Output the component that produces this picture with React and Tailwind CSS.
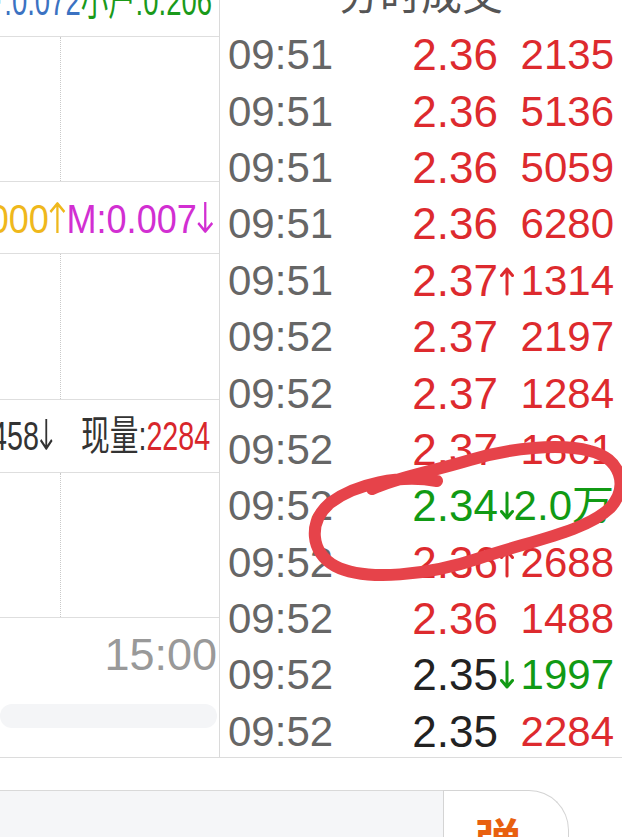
import React from 'react';

const RED = 'text-[#dd2a2e]';
const GREEN = 'text-[#119a14]';
const BLACK = 'text-[#222222]';

const ticks = [
  { time: '09:51', price: '2.36', vol: '2135', pc: RED, vc: RED },
  { time: '09:51', price: '2.36', vol: '5136', pc: RED, vc: RED },
  { time: '09:51', price: '2.36', vol: '5059', pc: RED, vc: RED },
  { time: '09:51', price: '2.36', vol: '6280', pc: RED, vc: RED },
  { time: '09:51', price: '2.37', arrow: 'up', vol: '1314', pc: RED, vc: RED },
  { time: '09:52', price: '2.37', vol: '2197', pc: RED, vc: RED },
  { time: '09:52', price: '2.37', vol: '1284', pc: RED, vc: RED },
  { time: '09:52', price: '2.37', vol: '1861', pc: RED, vc: RED },
  { time: '09:52', price: '2.34', arrow: 'down', vol: '2.0万', pc: GREEN, vc: GREEN },
  { time: '09:52', price: '2.36', arrow: 'up', vol: '2688', pc: RED, vc: RED },
  { time: '09:52', price: '2.36', vol: '1488', pc: RED, vc: RED },
  { time: '09:52', price: '2.35', arrow: 'down', vol: '1997', pc: BLACK, vc: GREEN },
  { time: '09:52', price: '2.35', vol: '2284', pc: BLACK, vc: RED },
];

// small trend arrow between price and volume
const Arrow = ({ dir }) => (
  <svg width="14" height="30" viewBox="0 0 14 30" className="block">
    {dir === 'up' ? (
      <path d="M7 28 V3 M1.5 9.5 L7 3 L12.5 9.5" fill="none" stroke="currentColor" strokeWidth="3" strokeLinecap="round" strokeLinejoin="round" />
    ) : (
      <path d="M7 2 V27 M1.5 20.5 L7 27 L12.5 20.5" fill="none" stroke="currentColor" strokeWidth="3" strokeLinecap="round" strokeLinejoin="round" />
    )}
  </svg>
);

// thin arrow used in the indicator labels
const LabelArrow = ({ dir }) => (
  <svg width="20" height="31" viewBox="0 0 20 31" className="inline-block align-baseline">
    {dir === 'up' ? (
      <path d="M10 31 V1.5 M2 10 L10 1.5 L18 10" fill="none" stroke="currentColor" strokeWidth="2.6" strokeLinejoin="round" />
    ) : (
      <path d="M10 0 V29.5 M2 21 L10 29.5 L18 21" fill="none" stroke="currentColor" strokeWidth="2.6" strokeLinejoin="round" />
    )}
  </svg>
);

const TickRow = ({ t }) => (
  <div className="flex h-[56.4px] shrink-0 items-center pl-[8px] pr-[8px] text-[42px] leading-none">
    <span className="text-[#666666]">{t.time}</span>
    <span className={`flex-1 text-right text-[44px] ${t.pc}`}>{t.price}</span>
    <span className={`flex w-[17px] justify-center ${t.vc}`}>{t.arrow && <Arrow dir={t.arrow} />}</span>
    <span className={`flex w-[99px] justify-end whitespace-nowrap ${t.vc}`}>{t.vol}</span>
  </div>
);

const ChartArea = ({ h }) => (
  <div className={`flex border-b border-[#dedede] ${h}`}>
    <div className="h-full w-[61px] border-r border-dotted border-[#c9c9c9]" />
  </div>
);

const App = () => {
  return (
    <div className="relative h-[837px] w-[622px] overflow-hidden bg-white font-['Liberation_Sans','Noto_Sans_CJK_SC',sans-serif]">
      <div className="flex h-[758px] border-b border-[#dcdcdc]">
        {/* left: indicator panels */}
        <div className="flex w-[220px] shrink-0 flex-col overflow-hidden border-r border-[#dadada]">
          <div className="flex h-[37px] shrink-0 items-end justify-end overflow-hidden border-b border-[#dedede] pb-[14px] pr-[7px]">
            <div className="shrink-0 origin-right scale-x-[0.67] whitespace-nowrap text-[41px] leading-none">
              <span className="text-[#3b72c2]">中户:0.072</span>
              <span className="text-[#1a9a1a]">小户:0.206</span>
            </div>
          </div>
          <ChartArea h="h-[145px]" />
          <div className="flex h-[72px] shrink-0 items-end justify-end overflow-hidden border-b border-[#dedede] pb-[13px] pr-[5px]">
            <div className="shrink-0 origin-right scale-x-[0.88] whitespace-nowrap text-[41px] leading-none">
              <span className="text-[#efb81c]">DEA:0.000<LabelArrow dir="up" /></span>
              <span className="text-[#d22fd2]">M:0.007<LabelArrow dir="down" /></span>
            </div>
          </div>
          <ChartArea h="h-[146px]" />
          <div className="flex h-[73px] shrink-0 items-end justify-end overflow-hidden border-b border-[#dedede] pb-[15px] pr-[9px]">
            <div className="shrink-0 origin-right scale-x-[0.7] whitespace-nowrap text-[41px] leading-none text-[#333333]">
              <span>均量:1458<LabelArrow dir="down" /></span>
              <span className="ml-[40px]">现量:</span>
              <span className="text-[#d8262b]">2284</span>
            </div>
          </div>
          <ChartArea h="h-[145px]" />
          <div className="flex flex-1 flex-col items-end pr-[2px] pt-[14px]">
            <span className="text-[45px] leading-none text-[#999999]">15:00</span>
            <div className="mt-[27px] h-[24px] w-full rounded-full bg-[#f4f5f7]" />
          </div>
        </div>

        {/* right: tick list */}
        <div className="flex flex-1 flex-col overflow-hidden">
          <div className="flex h-[27px] shrink-0 items-end justify-center overflow-hidden pb-[14px]">
            <span className="font-['Noto_Sans_CJK_SC',sans-serif] text-[41px] leading-none text-[#555555]">分时成交</span>
          </div>
          {ticks.map((t, i) => (
            <TickRow key={i} t={t} />
          ))}
        </div>
      </div>

      {/* bottom bar */}
      <div className="h-[32px]" />
      <div className="flex h-[47px]">
        <div className="w-[443px] border-t border-[#d9d9d9] bg-[#f5f6f8]" />
        <div className="w-[126px] overflow-hidden rounded-tr-[40px] border-l border-r border-t border-[#d4d4d4] bg-white pl-[31px] pt-[23px]">
          <span className="font-['Noto_Sans_CJK_SC',sans-serif] text-[46px] font-bold leading-none text-[#e8600f]">弹</span>
        </div>
      </div>

      {/* hand-drawn mark */}
      <svg className="pointer-events-none absolute left-0 top-0" width="622" height="837" viewBox="0 0 622 837">
        <path
          d="M437 481 C 400 474, 355 484, 330 503 C 308 522, 310 552, 335 566 C 365 582, 430 575, 480 558 C 530 541, 585 532, 610 508 C 630 486, 620 458, 590 451 C 560 443, 510 448, 470 460 C 430 472, 395 478, 372 489"
          fill="none"
          stroke="#e6434a"
          strokeWidth="12"
          strokeLinecap="round"
          strokeLinejoin="round"
        />
      </svg>
    </div>
  );
};

export default App;
